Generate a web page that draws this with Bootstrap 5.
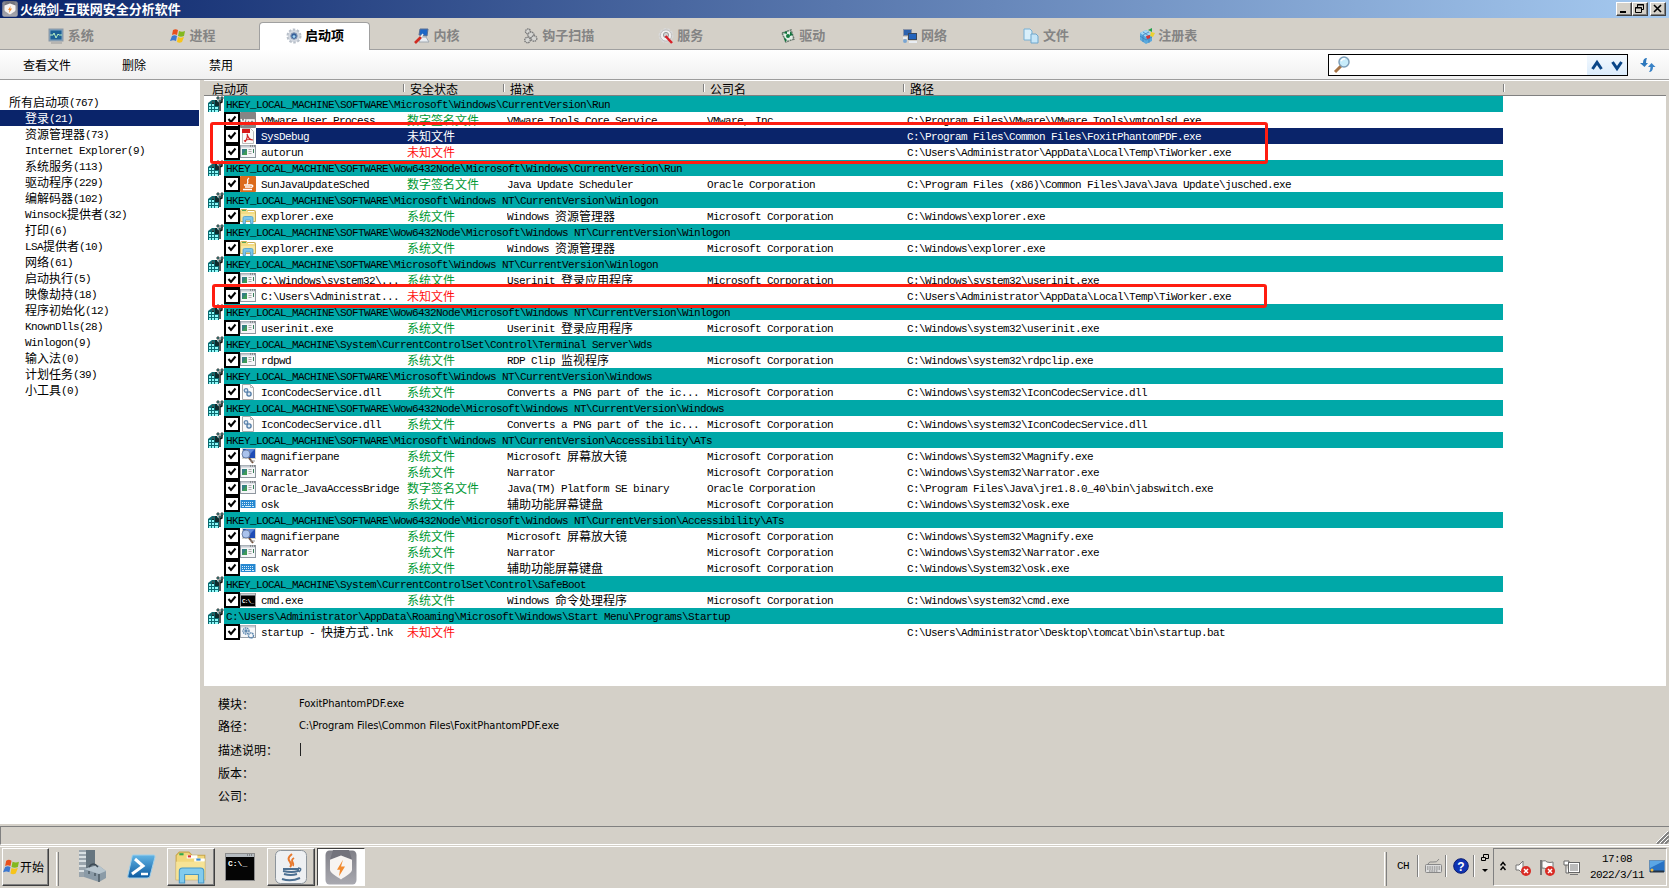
<!DOCTYPE html>
<html lang="zh-CN">
<head>
<meta charset="utf-8">
<title>火绒剑-互联网安全分析软件</title>
<link href="https://cdn.jsdelivr.net/npm/bootstrap@5.3.0/dist/css/bootstrap.min.css" rel="stylesheet">
<style>
:root{--face:#d4d0c8;--navy:#0a246a;--teal:#00a8a8}
html,body{height:100%;overflow:hidden}
body{font:12px/16px "Liberation Mono","Noto Sans CJK SC",monospace;color:#000;background:var(--face)}
svg{display:block;flex:none}
.zh{font-family:"Noto Sans CJK SC",sans-serif;font-size:12px;letter-spacing:0}
.en{font-family:"Liberation Mono",monospace;font-size:11px;letter-spacing:-.6px}
.line{display:flex;white-space:pre;height:16px;line-height:16px}
.line span{flex:none;height:16px;line-height:16px}
.line .en{line-height:18px}
.line .zh{line-height:16px}
.titlebar{height:18px;background:linear-gradient(90deg,#0a246a,#a6caf0);color:#fff;padding:0 3px 0 2px}
.caption{font:bold 13px/18px "Noto Sans CJK SC",sans-serif;margin-left:2px}
.winbtn{width:16px;height:14px;background:var(--face);border:1px solid;border-color:#fff #404040 #404040 #fff;box-shadow:inset -1px -1px #808080}
.winbtn.close-btn{margin-left:2px}
.tabs{height:32px;padding-left:10px;border-bottom:1px solid #a0a0a0}
.tabitem{width:121.9px;height:32px;color:#848484;font:bold 13px/18px "Noto Sans CJK SC",sans-serif;padding-top:3px;gap:3.5px}
.tabitem span{margin-top:-2px}
.tabitem.active{width:111px;margin:4px 5.5px 0;height:28px;background:#fff;color:#000;border:1px solid #a0a0a0;border-bottom:0;border-radius:4px 4px 0 0;padding:0 0 1px}
.tools{height:30px;background:linear-gradient(#fff,#f0f0f0);border-bottom:1px solid #9c9c9c;padding-left:23px;line-height:28px}
.t1{width:99px}.t2{width:87px}
.search{width:300px;height:22px;border:1px solid #000;background:#fff;margin-right:12px}
.arrows{width:40px;background:linear-gradient(#f3f9ff,#dcecfb)}
.refresh{margin-right:13px}
.side{width:200px;height:744px;background:#fff;padding-top:14px;flex:none}
.side .line{padding-left:25px;width:199px}
.side .line:first-child{padding-left:9px}
.side .sel,.entry .sel{background:var(--navy);color:#fff}
.main{margin-left:4px;border-top:1px solid #fff}
.listbox{height:605px;width:1462px;background:#fff}
.heads{height:15px;background:var(--face);border-bottom:1px solid #808080;line-height:15px}
.heads div{height:14px;padding-left:6px;position:relative}
.heads div:first-child{padding-left:8px}
.heads div+div::before{content:"";position:absolute;left:-1px;top:3px;height:8px;border-left:1px solid #808080;border-right:1px solid #fff}
.h1c{width:200px}.h2c{width:100px}.h3c{width:200px}.h4c{width:200px}.h5c{width:600px}
.group{padding-left:4px}
.group .fill{width:1279px;background:var(--teal);padding-left:2px;color:#000}
.entry{padding-left:20px}
.tick{width:16px;height:16px;border:2px solid #000;background:#fff}
.cells{width:1247px;height:16px}
.cells>div{overflow:hidden}
.c1{width:151px;padding-left:5px}.c2{width:100px}.c3{width:200px}.c4{width:200px}.c5{width:580px}
.ok{color:#009933}.bad{color:#ff1010}
.sel .bad{color:#fff}
.mark-box{position:absolute;border:3px solid #ff1d10;border-radius:3px;pointer-events:none}
.m1{left:210px;top:122px;width:1058px;height:42px}
.m2{left:212px;top:284px;width:1055px;height:24px}
.info{padding:9px 0 0 14px}
.info>div{height:22.9px;line-height:18px}
.info>div:nth-child(2){height:24px;margin-top:-1px}
.info .lab{width:81px}
.tah{font:11px/18px "DejaVu Sans Condensed","DejaVu Sans",sans-serif;letter-spacing:-.04px}
.caret{width:1px;height:13px;background:#222;margin-top:2px;margin-left:1px}
.status{height:19px;margin-top:2px;border-top:1px solid #808080;border-left:1px solid #808080;border-bottom:1px solid #fff}
.taskbar{height:42px;border-top:1px solid #fff;padding:1px 2px 0 2px}
.raised{border:1px solid;border-color:#fff #404040 #404040 #fff;box-shadow:inset -1px -1px #808080}
.tbtn{width:48px;height:38px}
.tbtn.start{width:47px}
.pressed{border:1px solid;border-color:#404040 #fff #fff #404040;background:#fff}
.vsep{width:3px;height:34px;border-left:1px solid #fff;border-right:1px solid #808080}
.vthin{width:2px;height:22px;border-left:1px solid #808080;border-right:1px solid #fff}
.tray{width:174px;height:38px;border:1px solid;border-color:#808080 #fff #fff #808080}
.clock{width:58px;margin-left:8px;line-height:16px;padding-bottom:1px}
</style>
</head>
<body class="d-flex flex-column">
<svg width="0" height="0" class="position-absolute">
<defs><linearGradient id="blue" x2="0" y2="1"><stop stop-color="#63b5e5"/><stop offset="1" stop-color="#0c5aa0"/></linearGradient>
<linearGradient id="grey" x2="0" y2="1"><stop stop-color="#808088"/><stop offset="1" stop-color="#a9a9b0"/></linearGradient></defs>
<symbol id="shield" viewBox="0 0 32 32"><rect x=".5" y=".5" width="31" height="31" rx="4" fill="url(#grey)"/><path d="M8 0h16l3 9-11-4L5 9z" fill="#73737c"/><path d="M16 5l11 4v9c0 3-7 6-11 9-4-3-11-6-11-9V9z" fill="#f7f4f2"/><path d="M18 9l-6 9h3l-1 6 6-9h-4z" fill="#f28a2e"/></symbol>
<symbol id="flag4" viewBox="0 0 16 16"><path d="M3 2c2-1 3-1 5 0L7 7C5 6 4 6 2 7z" fill="#e8501c"/><path d="M9 3c2 1 4 1 6 0l-1 5c-2 1-4 1-6 0z" fill="#83b81e"/><path d="M2 8c2-1 3-1 5 0l-1 5C4 12 3 12 0 13z" fill="#3c78d0"/><path d="M8 9c2 1 3 1 6 0l-2 5c-2 1-3 1-5 0z" fill="#f7c419"/></symbol>
<symbol id="system" viewBox="0 0 16 16"><rect x="1" y="1" width="14" height="12" fill="#7ba0c0" stroke="#8b98a4"/><rect x="2.5" y="2.5" width="11" height="9" fill="#1c6095"/><path d="M2 7h3l1-2 2 5 2-4 1 1h3" fill="none" stroke="#b8eec0"/><path d="M3 15h11" stroke="#999"/></symbol>
<symbol id="gear" viewBox="0 0 16 16"><circle cx="8" cy="8" r="6.2" fill="#d9dde4" stroke="#b9c0ca" stroke-width="2.6" stroke-dasharray="2.4 1.5"/><circle cx="8" cy="8" r="5.6" fill="#d3d8e0"/><circle cx="8" cy="8" r="3.2" fill="#345f9b" stroke="#8798b3"/><circle cx="8" cy="8.6" r="1.4" fill="#a5d6f2"/></symbol>
<symbol id="kernel" viewBox="0 0 16 16"><path d="M6 1h8l-1 7-8-1z" fill="#1e66c5" stroke="#5b7095"/><path d="M7 9l5 0 3 5H5z" fill="#e9edf2" stroke="#a0a8b0"/><path d="M1 15l6-6" stroke="#cf2b21" stroke-width="2.6"/><path d="M7 9l2-3" stroke="#eee" stroke-width="1.5"/></symbol>
<symbol id="hooks" viewBox="0 0 16 16"><g fill="#d5d5d2" stroke="#7c7c7c" stroke-width="1.4"><circle cx="5" cy="3.500" r="2.5" stroke-dasharray="1.5 .6"/><circle cx="8" cy="7" r="3" stroke-dasharray="1.5 .6"/><circle cx="4.500" cy="12" r="2.8" stroke-dasharray="1.5 .6"/><circle cx="11" cy="10.500" r="2.800" stroke-dasharray="1.500 .6"/></g></symbol>
<symbol id="service" viewBox="0 0 16 16"><circle cx="8" cy="7.5" r="6" fill="#eee" stroke="#d9d9d9" stroke-width="2.8" stroke-dasharray="2.6 1"/><circle cx="8" cy="7.500" r="5.600" fill="#f0f0f0" stroke="#b5b5b5" stroke-width=".8"/><circle cx="8" cy="7" r="2.600" fill="#d3d3d3" stroke="#999"/><path d="M7.500 8l6.500 7" stroke="#d72027" stroke-width="2.5"/></symbol>
<symbol id="driver" viewBox="0 0 16 16"><path d="M2 5l9-3 3 9-8 3z" fill="#e4eee6" stroke="#69786e" stroke-width="1.5" stroke-dasharray="2 .7"/><path d="M3 5l4-2v3zM10 3l3 4-3 1zM4 9l3 3-2 2zM12 9l-3 3z" fill="#12733d"/><circle cx="8" cy="8" r="2" fill="#167c41"/></symbol>
<symbol id="network" viewBox="0 0 16 16"><rect x="1.5" y="1.5" width="8" height="6" fill="#2d62ae" stroke="#8a94a8"/><rect x="6.5" y="5.5" width="8" height="6" fill="#2364bd" stroke="#38475e"/><path d="M1 10h4M1 13h4M7 14h8" stroke="#e8edf3" stroke-width="2"/><circle cx="3" cy="13" r="2" fill="#79a4d0"/></symbol>
<symbol id="files" viewBox="0 0 16 16"><path d="M1 1h6l2 2v9H1z" fill="#d9effa" stroke="#77b0d5"/><path d="M8 6h5l2 2v7H8z" fill="#c6e6f8" stroke="#6ea6cc"/></symbol>
<symbol id="cubes" viewBox="0 0 16 16"><path d="M1 5l6-3 6 4v7l-6 3-6-4z" fill="#5aa9dd"/><path d="M1 5l6-3 6 4-6 3z" fill="#a3d7f4"/><path d="M1 8l6 4 6-3M4 4l6 4v7M4 7v7M10 4L4 7" stroke="#3279b7" fill="none" stroke-width=".7"/><path d="M9 2l4-2v4z" fill="#24a34b"/><path d="M12 4l4 1-2 4-3-1z" fill="#edd130"/><path d="M7 8l4-1v3l-3 1z" fill="#d43434"/></symbol>
<symbol id="regkey" viewBox="0 0 16 16"><path d="M0 7l4-3h5l2 3v9H0z" fill="#0b6a70"/><path d="M1 8h2v2H1zM4 8h2v2H4zM1 11h2v2H1zM4 11h2v2H4zM7 11h3v2H7zM1 14h2v2H1zM4 14h2v2H4zM7 14h3v2H7zM4 5h2v2H4z" fill="#8cf8f8"/><path d="M9 1h2v2H9zM13 1h2v2h-2zM11 4h2v2h-2z" fill="#6cf6f6" stroke="#111" stroke-width=".8"/><path d="M14 3v3l-2 1v8M5 5v3M8 4v6M10 6v4" fill="none" stroke="#111" stroke-width="1.400"/></symbol>
<symbol id="app" viewBox="0 0 16 16"><rect x=".5" y="1.5" width="15" height="12" fill="#f5f6f8" stroke="#8f979f"/><path d="M1 2.5h14" stroke="#c4cad1" stroke-width="2"/><path d="M10 2h1m1 0h1m1 0h1" stroke="#555"/><rect x="2" y="5" width="5" height="6" fill="#347e84"/><path d="M2 11l5-6v6z" fill="#3d9a58"/><path d="M8.500 5.500h3m-3 2h3m-3 2h3" stroke="#aaa"/><path d="M13.500 5v4" stroke="#357d58"/></symbol>
<symbol id="vm" viewBox="0 0 16 16"><rect width="16" height="16" rx="1" fill="#858585"/><path d="M1 7l2 5 2-5M7 12V8h3v4-4h4v4" fill="none" stroke="#fff" stroke-width="1.5"/></symbol>
<symbol id="pdf" viewBox="0 0 16 16"><path d="M2.500 .5h8l3 3v12h-11z" fill="#fafafa" stroke="#bbb"/><path d="M2 1h8v4H2z" fill="#d61919"/><path d="M5 14c2-3 3-6 2-8m0 0c1 4 3 6 6 6M4 13c3-2 5-2 9-1" stroke="#d12424" fill="none" stroke-width="1.2"/></symbol>
<symbol id="javao" viewBox="0 0 16 16"><rect width="16" height="16" rx="1" fill="#dc6b1c"/><path d="M9 2c-4 3 1 3-2 6M4 9h7c3 0 2 3-1 2M5 11h5M3 13.500h9" fill="none" stroke="#fff" stroke-width="1.3"/></symbol>
<symbol id="folder" viewBox="0 0 32 32"><path d="M2 5l3-3h9l3 3h12v23H2z" fill="#f1d77a" stroke="#c8a548"/><path d="M5 3h4v2H5z" fill="#30a84b"/><path d="M12 5h10v3H12z" fill="#fff"/><path d="M13 5h3v2h-3z" fill="#d33"/><path d="M19 8h10v3H19z" fill="#fff"/><path d="M21 8h4v2h-4z" fill="#3b8dd6"/><path d="M2 11h27v17H2z" fill="#f6e396"/><path d="M5 31V20q0-3 3-3h17q3 0 3 3v11h-5v-8H10v8z" fill="#82cbed" stroke="#4598c8"/></symbol>
<symbol id="folder16" viewBox="0 0 16 16"><path d="M.5 2.500q0-1 1-1h5l1 1h7q1 0 1 1v10H.5z" fill="#f3dc84" stroke="#c9ad58"/><path d="M2 2.500h4" stroke="#58a858"/><path d="M8 3.500h6" stroke="#fff"/><path d="M1 6h14v7H1z" fill="#f7e69f"/><path d="M3 15.500V10q0-1.500 1.500-1.500h7Q13 8.500 13 10v5.500h-2.500V12h-5v3.500z" fill="#7cc5ea" stroke="#4a9fce" stroke-width=".8"/></symbol>
<symbol id="dll" viewBox="0 0 16 16"><path d="M2.500 .5h8l3 3v12h-11z" fill="#fbfbfb" stroke="#aaa"/><path d="M10.500 .5v3h3" fill="none" stroke="#bbb"/><circle cx="6" cy="6.500" r="1.800" fill="#dce8f2" stroke="#6288b0" stroke-width="1.300"/><circle cx="9" cy="10" r="2.1" fill="#dce8f2" stroke="#4f7aa6" stroke-width="1.300"/></symbol>
<symbol id="mag" viewBox="0 0 16 16"><rect x="2.500" y=".5" width="13" height="10" fill="#1d4cb6" stroke="#d4d4cc"/><path d="M6 1h9L7 9z" fill="#5a86dd"/><circle cx="6" cy="6" r="4" fill="#a9c2ec" stroke="#6f83a7"/><path d="M9 10l4 5" stroke="#73503a" stroke-width="2"/><path d="M10 13h5" stroke="#999"/></symbol>
<symbol id="osk" viewBox="0 0 16 16"><rect x=".5" y="4" width="15" height="8" fill="#2788d1"/><path d="M2 6.500h12M2 8.500h12" stroke="#d7edfa" stroke-dasharray="1 1"/><path d="M2 10.500h2m1 0h6m1 0h2" stroke="#d7edfa"/></symbol>
<symbol id="bat" viewBox="0 0 16 16"><rect x=".5" y="1.500" width="15" height="12" fill="#f6f7f9" stroke="#9aa2aa"/><path d="M1 2.500h14" stroke="#c4cad1" stroke-width="2"/><g fill="none" stroke="#5683ad" stroke-width="1.400"><circle cx="6" cy="7" r="3" stroke-dasharray="1.500 .6"/><circle cx="6" cy="7" r="1"/><circle cx="11" cy="11.500" r="2.500" stroke-dasharray="1.500 .6"/></g></symbol>
<symbol id="err" viewBox="0 0 10 10"><circle cx="5" cy="5" r="5" fill="#d92b24"/><path d="M3 3l4 4m0-4L3 7" stroke="#fff" stroke-width="1.500"/></symbol>
</svg>

<header class="titlebar d-flex align-items-center flex-shrink-0">
 <svg width="16" height="16"><use href="#shield"/></svg>
 <span class="caption">火绒剑-互联网安全分析软件</span>
 <div class="ms-auto d-flex">
  <div class="winbtn"><svg width="14" height="12"><path d="M3 9h6" stroke="#000" stroke-width="2"/></svg></div>
  <div class="winbtn"><svg width="14" height="12"><path d="M4.500 4V1.500h6v5H8M4 2h7M2.500 4.500h6v5h-6zM2 5h7" fill="none" stroke="#000"/></svg></div>
  <div class="winbtn close-btn"><svg width="14" height="12"><path d="M3 2l7 7m0-7L3 9" stroke="#000" stroke-width="1.600"/></svg></div>
 </div>
</header>
<nav class="tabs d-flex flex-shrink-0" id="tabs"></nav>
<div class="tools d-flex align-items-center flex-shrink-0 zh">
 <span class="t1">查看文件</span><span class="t2">删除</span><span>禁用</span>
 <div class="search d-flex ms-auto">
  <svg width="20" height="20" class="ms-1"><path d="M2 17l6-6" stroke="#a87445" stroke-width="3"/><circle cx="11" cy="7" r="5" fill="#c7ecfb" stroke="#7d9fb9" stroke-width="1.500"/><path d="M8 6q2-3 4-2" stroke="#fff" fill="none" stroke-width="1.500"/></svg>
  <div class="arrows ms-auto"><svg width="40" height="20"><path d="M5.500 14l4.500-6.500 4.500 6.500" fill="none" stroke="#0a4688" stroke-width="3"/><path d="M25.500 7l4.500 6.500L34.500 7" fill="none" stroke="#0a4688" stroke-width="3"/></svg></div>
 </div>
 <svg width="16" height="16" viewBox="0 0 16 16" class="refresh"><path d="M7 1Q3 1 3 6H0l4.500 4L8 6H6q0-3 1-5z" fill="#2d78bd"/><path d="M9 15q4 0 4-5h2.500L11.500 6 8 10h2.500q0 3-1.500 5z" fill="#3a83c7"/></svg>
</div>
<div class="d-flex flex-shrink-0">
 <aside class="side" id="side"></aside>
 <main class="main flex-grow-1">
  <div class="listbox">
   <div class="heads d-flex zh"><div class="h1c">启动项</div><div class="h2c">安全状态</div><div class="h3c">描述</div><div class="h4c">公司名</div><div class="h5c">路径</div><div></div></div>
   <div id="rows"></div>
  </div>
  <div class="info zh">
   <div class="d-flex"><span class="lab">模块：</span><span class="tah">FoxitPhantomPDF.exe</span></div>
   <div class="d-flex"><span class="lab">路径：</span><span class="tah">C:\Program Files\Common Files\FoxitPhantomPDF.exe</span></div>
   <div class="d-flex"><span class="lab">描述说明：</span><span class="caret"></span></div>
   <div>版本：</div>
   <div>公司：</div>
  </div>
 </main>
</div>
<div class="status d-flex justify-content-end align-items-end flex-shrink-0"><svg width="14" height="14"><path d="M2 14L14 2M6 14l8-8M10 14l4-4" stroke="#808080" stroke-width="2"/><path d="M1 13L13 1M5 13l8-8M9 13l4-4" stroke="#fff"/></svg></div>
<footer class="taskbar d-flex mt-auto flex-shrink-0">
 <div class="raised tbtn start d-flex align-items-center zh"><svg width="17" height="18"><use href="#flag4"/></svg>开始</div>
 <div class="vsep mt-1" style="margin-left:7px"></div>
 <svg width="32" height="34" style="margin:1px 0 0 18px" viewBox="0 0 32 34"><path d="M2 1h7v27H2z" fill="#9aa5ad"/><path d="M9 1h9v20H9z" fill="#66757f"/><path d="M2 4h7M2 8h7M2 12h7M2 17h7M2 22h7" stroke="#edf2f4" stroke-width="1.500"/><path d="M7 20l14-4 8 6v7l-7 4-15-5z" fill="#8b9ba7"/><path d="M7 20l14-4 8 6-7 3z" fill="#b6c4cd"/><path d="M12 18q4-6 9 0" fill="none" stroke="#3e4b55" stroke-width="1.500"/><path d="M22 25v8M12 22v3M18 24v3" stroke="#4e5c66" stroke-width="1.500"/></svg>
 <svg width="30" height="30" style="margin:4px 0 0 17px" viewBox="0 0 30 30"><path d="M7 3h21q1 0 1 2l-5 19q0 2-3 2H3q-2 0-1-3L6 5q0-2 1-2z" fill="url(#blue)" stroke="#9fd0ec"/><path d="M9 7l8 7-11 8" fill="none" stroke="#fff" stroke-width="3"/><path d="M15 22h7" stroke="#fff" stroke-width="2.500"/></svg>
 <div class="raised tbtn d-flex align-items-center justify-content-center" style="margin-left:11px"><svg width="34" height="34"><use href="#folder"/></svg></div>
 <svg width="30" height="28" style="margin:5px 0 0 10px" viewBox="0 0 30 28"><rect x=".5" y=".5" width="29" height="27" fill="#050505" stroke="#8c8c8c"/><path d="M1 2.500h28" stroke="#b5bbc0" stroke-width="3"/><path d="M22 2h1m1 0h1m1 0h1" stroke="#555"/><text x="3" y="13" font-size="8" font-weight="bold" fill="#fff" font-family="Liberation Mono">C:\_</text></svg>
 <div class="raised tbtn d-flex align-items-center justify-content-center" style="margin-left:12px"><svg width="34" height="36" viewBox="0 0 34 36"><rect x="1.500" y="1.500" width="31" height="33" rx="5" fill="#eef0f2" stroke="#8c949b"/><path d="M18 5c-9 7 3 8-2 13m4-9c-5 3 1 5-1 8" fill="none" stroke="#e8792d" stroke-width="2"/><path d="M9 20h15v2q-6 2-15 0M10 25q7 2 13 0M8 30q9 3 18-1" fill="none" stroke="#4b6f91" stroke-width="2"/><path d="M24 19q5 0 1 4" fill="none" stroke="#4b6f91" stroke-width="1.500"/></svg></div>
 <div class="pressed tbtn d-flex align-items-center justify-content-center" style="margin-left:2px"><svg width="32" height="35" viewBox="0 0 32 32" preserveAspectRatio="none"><use href="#shield"/></svg></div>
 <div class="ms-auto d-flex align-items-start">
  <div class="vsep mt-1"></div>
  <div class="d-flex align-items-center" style="height:36px">
  <span class="en" style="margin-left:10px;width:20px;font-size:11px">CH</span><div class="vthin"></div>
  <svg width="17" height="16" style="margin:0 3px 0 6px"><rect x=".5" y="6.500" width="16" height="8" rx="1" fill="#ddd" stroke="#888"/><path d="M2 9h13M2 11h13M4 13h9" stroke="#777" stroke-dasharray="1.500 .8"/><path d="M3 6q1-3 5-2t6-3" fill="none" stroke="#888"/></svg>
  <div class="vthin"></div>
  <svg width="16" height="16" style="margin:0 4px 0 6px"><circle cx="8" cy="8" r="7.300" fill="#1034b4" stroke="#0a1c70"/><text x="8" y="12.500" text-anchor="middle" font-size="12" font-weight="bold" fill="#fff" font-family="Liberation Sans">?</text></svg>
  <div class="vthin"></div>
  <svg width="10" height="22" style="margin:0 3px 5px 5px"><path d="M3.500 4V1.500h5v4H6M1.500 4.500h4v3h-4z" fill="none" stroke="#000"/><path d="M2 16h6l-3 3z"/></svg>
  </div>
  <div class="tray d-flex align-items-center">
   <svg width="6" height="12" style="margin:0 0 3px 6px"><path d="M.5 5.500l2.500-3 2.500 3M.5 10l2.500-3L5.500 10" fill="none" stroke="#000" stroke-width="1.500"/></svg>
   <svg width="17" height="17" style="margin:2px 0 0 9px"><path d="M1 5h3l4-4v13l-4-4H1z" fill="#fafafa" stroke="#777"/><use href="#err" x="6" y="6" width="10" height="10"/></svg>
   <svg width="17" height="17" style="margin:2px 0 0 7px"><path d="M2 0v15" stroke="#777" stroke-width="2"/><path d="M3 1q4-1 5 1 3 1 6 0v8q-3 1-6-1-2-1-5-1z" fill="#fafafa" stroke="#777"/><use href="#err" x="6" y="6" width="10" height="10"/></svg>
   <svg width="17" height="17" style="margin:0 0 0 7px"><path d="M1 2h5v4H1zM3 6v8h3" fill="#fff" stroke="#666"/><rect x="6.500" y="4.500" width="9" height="8" fill="#bbb" stroke="#fff"/><rect x="5.500" y="3.500" width="11" height="10" fill="none" stroke="#666"/><path d="M7 15.500h8" stroke="#777"/></svg>
   <div class="clock text-center en">17:08<br>2022/3/11</div>
   <svg width="16" height="14" style="margin:0 0 0 3px"><rect x=".5" y=".5" width="15" height="11" fill="#2872c4" stroke="#668eb5"/><path d="M1 1h14L1 8z" fill="#5ba6e5"/><path d="M1 11.500h14" stroke="#223244" stroke-width="2"/><circle cx="3" cy="10" r="1.500" fill="#f1bb42"/></svg>
  </div>
 </div>
</footer>
<div class="mark-box m1"></div><div class="mark-box m2"></div>

<script>
// CJK runs are 12px wide per character, Latin runs 6px, like a bitmap console font
const esc=s=>s.replace(/&/g,'&amp;').replace(/</g,'&lt;');
const mix=s=>s.replace(/[\u3000-\u9fff\uff00-\uffef]+|[^\u3000-\u9fff\uff00-\uffef]+/g,r=>`<span class="${/[\u3000-\u9fff]/.test(r)?'zh':'en'}">${esc(r)}</span>`);
const cmdIcon='<svg width="16" height="16"><rect x=".5" y="1.500" width="15" height="13" fill="#000" stroke="#999"/><path d="M1 2.500h14" stroke="#c9ced3" stroke-width="2"/><text x="2" y="11" font-size="6" fill="#fff" font-family="Liberation Mono" font-weight="bold" textLength="12">C:\\_</text></svg>';
const ico=n=>n=='cmd'?cmdIcon:`<svg width="16" height="16"><use href="#${n}"/></svg>`;
const tabs=[['system','系统'],['flag4','进程'],['gear','启动项'],['kernel','内核'],['hooks','钩子扫描'],['service','服务'],['driver','驱动'],['network','网络'],['files','文件'],['cubes','注册表']];
document.getElementById('tabs').innerHTML=tabs.map((t,i)=>`<div class="tabitem d-flex align-items-center justify-content-center${i==2?' active':''}">${ico(t[0])}<span>${t[1]}</span></div>`).join('');
const side=['所有启动项(767)','登录(21)','资源管理器(73)','Internet Explorer(9)','系统服务(113)','驱动程序(229)','编解码器(102)','Winsock提供者(32)','打印(6)','LSA提供者(10)','网络(61)','启动执行(5)','映像劫持(18)','程序初始化(12)','KnownDlls(28)','Winlogon(9)','输入法(0)','计划任务(39)','小工具(0)'];
document.getElementById('side').innerHTML=side.map((t,i)=>`<div class="line${i==1?' sel':''}">${mix(t)}</div>`).join('');
const S='系统文件',D='数字签名文件',U='未知文件',M='Microsoft Corporation',O='Oracle Corporation';
const R=String.raw, H=R`HKEY_LOCAL_MACHINE\SOFTWARE\ `.trim(), W=R`C:\Windows\ `.trim();
const T=R`C:\Users\Administrator\AppData\Local\Temp\TiWorker.exe`;
const rows=[
[H+R`Microsoft\Windows\CurrentVersion\Run`],
['vm','VMware User Process',D,'VMware Tools Core Service','VMware, Inc',R`C:\Program Files\VMware\VMware Tools\vmtoolsd.exe`],
['pdf','SysDebug',U,'','',R`C:\Program Files\Common Files\FoxitPhantomPDF.exe`,1],
['app','autorun',U,'','',T],
[H+R`Wow6432Node\Microsoft\Windows\CurrentVersion\Run`],
['javao','SunJavaUpdateSched',D,'Java Update Scheduler',O,R`C:\Program Files (x86)\Common Files\Java\Java Update\jusched.exe`],
[H+R`Microsoft\Windows NT\CurrentVersion\Winlogon`],
['folder16','explorer.exe',S,'Windows 资源管理器',M,W+'explorer.exe'],
[H+R`Wow6432Node\Microsoft\Windows NT\CurrentVersion\Winlogon`],
['folder16','explorer.exe',S,'Windows 资源管理器',M,W+'explorer.exe'],
[H+R`Microsoft\Windows NT\CurrentVersion\Winlogon`],
['app',R`C:\Windows\system32\...`,S,'Userinit 登录应用程序',M,W+R`system32\userinit.exe`],
['app',R`C:\Users\Administrat...`,U,'','',T],
[H+R`Wow6432Node\Microsoft\Windows NT\CurrentVersion\Winlogon`],
['app','userinit.exe',S,'Userinit 登录应用程序',M,W+R`system32\userinit.exe`],
[R`HKEY_LOCAL_MACHINE\System\CurrentControlSet\Control\Terminal Server\Wds`],
['app','rdpwd',S,'RDP Clip 监视程序',M,W+R`system32\rdpclip.exe`],
[H+R`Microsoft\Windows NT\CurrentVersion\Windows`],
['dll','IconCodecService.dll',S,'Converts a PNG part of the ic...',M,W+R`system32\IconCodecService.dll`],
[H+R`Wow6432Node\Microsoft\Windows NT\CurrentVersion\Windows`],
['dll','IconCodecService.dll',S,'Converts a PNG part of the ic...',M,W+R`system32\IconCodecService.dll`],
[H+R`Microsoft\Windows NT\CurrentVersion\Accessibility\ATs`],
['mag','magnifierpane',S,'Microsoft 屏幕放大镜',M,W+R`System32\Magnify.exe`],
['app','Narrator',S,'Narrator',M,W+R`System32\Narrator.exe`],
['app','Oracle_JavaAccessBridge',D,'Java(TM) Platform SE binary',O,R`C:\Program Files\Java\jre1.8.0_40\bin\jabswitch.exe`],
['osk','osk',S,'辅助功能屏幕键盘',M,W+R`System32\osk.exe`],
[H+R`Wow6432Node\Microsoft\Windows NT\CurrentVersion\Accessibility\ATs`],
['mag','magnifierpane',S,'Microsoft 屏幕放大镜',M,W+R`System32\Magnify.exe`],
['app','Narrator',S,'Narrator',M,W+R`System32\Narrator.exe`],
['osk','osk',S,'辅助功能屏幕键盘',M,W+R`System32\osk.exe`],
[R`HKEY_LOCAL_MACHINE\System\CurrentControlSet\Control\SafeBoot`],
['cmd','cmd.exe',S,'Windows 命令处理程序',M,W+R`system32\cmd.exe`],
[R`C:\Users\Administrator\AppData\Roaming\Microsoft\Windows\Start Menu\Programs\Startup`],
['bat','startup - 快捷方式.lnk',U,'','',R`C:\Users\Administrator\Desktop\tomcat\bin\startup.bat`]];
document.getElementById('rows').innerHTML=rows.map(r=>r.length==1
?`<div class="group d-flex">${ico('regkey')}<div class="fill line">${mix(r[0])}</div></div>`
:`<div class="entry d-flex"><div class="tick"><svg width="12" height="12"><path d="M2.500 5l2.500 3 4.500-5.500" fill="none" stroke="#000" stroke-width="2"/></svg></div>${ico(r[0])}<div class="cells d-flex${r[6]?' sel':''}"><div class="c1 line">${mix(r[1])}</div><div class="c2 line ${r[2]==U?'bad':'ok'}">${mix(r[2])}</div><div class="c3 line">${mix(r[3])}</div><div class="c4 line">${mix(r[4])}</div><div class="c5 line">${mix(r[5])}</div></div></div>`).join('');
</script>
<script src="https://cdn.jsdelivr.net/npm/bootstrap@5.3.0/dist/js/bootstrap.bundle.min.js"></script>
</body>
</html>
